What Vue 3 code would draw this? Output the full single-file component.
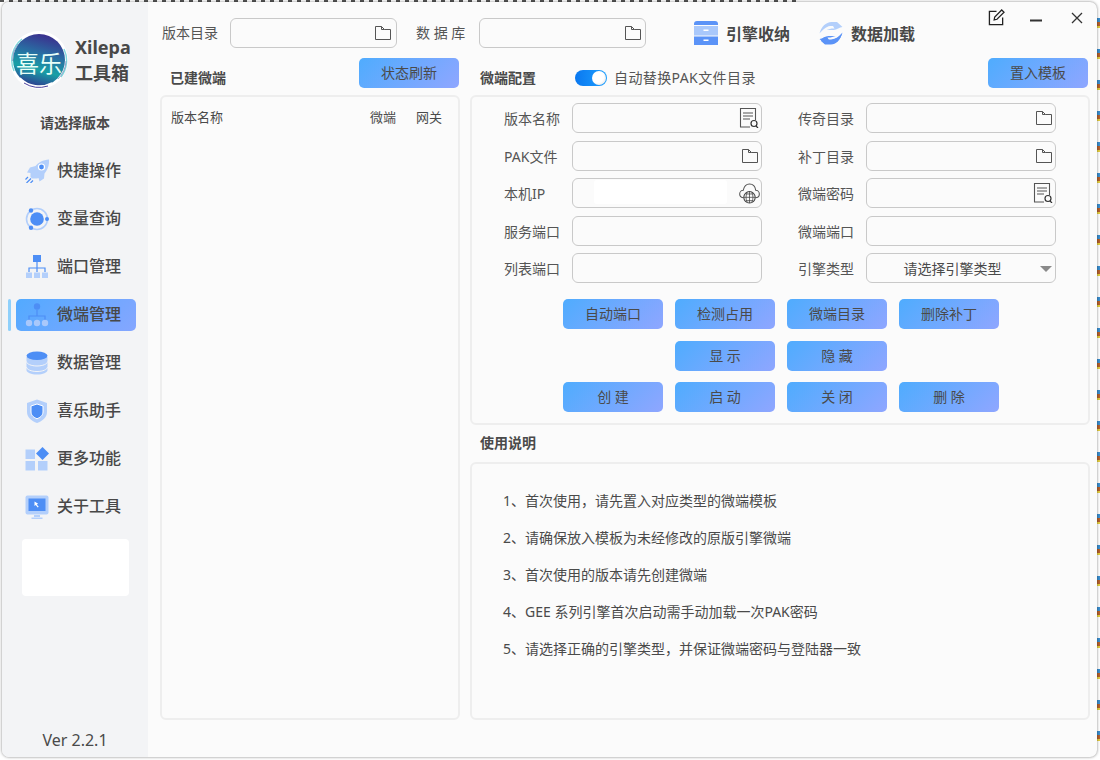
<script setup>
const navItems = [
  { label: '快捷操作', icon: 'rocket' },
  { label: '变量查询', icon: 'orbit' },
  { label: '端口管理', icon: 'org' },
  { label: '微端管理', icon: 'nodes', active: true },
  { label: '数据管理', icon: 'db' },
  { label: '喜乐助手', icon: 'shield' },
  { label: '更多功能', icon: 'apps' },
  { label: '关于工具', icon: 'monitor' },
]
const leftFields = [
  { label: '版本名称', icon: 'doc' },
  { label: 'PAK文件', icon: 'folder' },
  { label: '本机IP', icon: 'globe', mask: true },
  { label: '服务端口' },
  { label: '列表端口' },
]
const rightFields = [
  { label: '传奇目录', icon: 'folder' },
  { label: '补丁目录', icon: 'folder' },
  { label: '微端密码', icon: 'doc' },
  { label: '微端端口' },
  { label: '引擎类型', select: '请选择引擎类型' },
]
const formRows = leftFields.map((f, i) => [f, rightFields[i]])
const buttonRows = [
  ['自动端口', '检测占用', '微端目录', '删除补丁'],
  ['', '显 示', '隐 藏', ''],
  ['创 建', '启 动', '关 闭', '删 除'],
]
const notes = [
  '1、首次使用，请先置入对应类型的微端模板',
  '2、请确保放入模板为未经修改的原版引擎微端',
  '3、首次使用的版本请先创建微端',
  '4、GEE 系列引擎首次启动需手动加载一次PAK密码',
  '5、请选择正确的引擎类型，并保证微端密码与登陆器一致',
]
</script>

<template>
  <div class="window">
    <aside class="sidebar">
      <div class="brand">
        <div class="logo">
          <svg class="logo-art" viewBox="0 0 58 58">
            <defs>
              <linearGradient id="logoFill" x1="0.62" y1="0" x2="0.35" y2="1">
                <stop offset="0" stop-color="#3c2e8d" />
                <stop offset="0.35" stop-color="#2a6aa2" />
                <stop offset="0.68" stop-color="#18a0a6" />
                <stop offset="1" stop-color="#2f3a90" />
              </linearGradient>
            </defs>
            <circle cx="29" cy="29" r="29" fill="#fff" />
            <circle cx="29" cy="29" r="26" fill="url(#logoFill)" />
            <path d="M4 40A27 27 0 0 1 12 8M54 18a27 27 0 0 1-3 28" fill="none" stroke="#7fd8dc" stroke-width="1.400" />
            <path d="M2.500 30A27 27 0 0 1 8 13M56 30a27 27 0 0 1-8 18" fill="none" stroke="#8a8fc0" stroke-width="0.800" />
            <path d="M10 47a27 27 0 0 0 32 5" fill="none" stroke="#fff" stroke-width="1.600" />
            <path d="M14 52a29 29 0 0 0 24 3" fill="none" stroke="#4a3f9c" stroke-width="1" />
          </svg>
          <span class="logo-text">喜乐</span>
        </div>
        <div class="brand-name">
          <span>Xilepa</span>
          <span>工具箱</span>
        </div>
      </div>
      <div class="version-pick">请选择版本</div>
      <nav class="nav">
        <div v-for="item in navItems" :key="item.label" class="nav-row" :class="{ active: item.active }">
          <span class="nav-mark"></span>
          <div class="nav-item">
            <svg class="nav-icon" viewBox="0 0 24 24">
              <template v-if="item.icon === 'rocket'">
                <path d="M24 .5c.5 6-1.500 10.500-4.500 14l-.5 5-4.500 3-1-3.500-1.500.5H7l-1.500-1.500v-4l-3.500-.5 3-5 5.500-1.500C13.500 3.500 18 .8 24 .5z" fill="#b3cffb" />
                <circle cx="16.500" cy="8" r="3.600" fill="#fff" />
                <circle cx="16.500" cy="8" r="2.400" fill="#4d8ef5" />
                <path d="M1.500 24l4.500-4.500M.5 20.500L3 18M5.500 24l2.500-2.500" stroke="#4d8ef5" stroke-width="1.200" />
              </template>
              <template v-else-if="item.icon === 'orbit'">
                <circle cx="12" cy="12" r="10.500" fill="none" stroke="#b3cffb" stroke-width="1.600" />
                <circle cx="12" cy="12" r="6.800" fill="#4d8ef5" />
                <circle cx="6" cy="3.500" r="2.200" fill="#4d8ef5" />
                <circle cx="22" cy="12" r="2" fill="#4d8ef5" />
                <circle cx="6" cy="20.800" r="2.200" fill="#4d8ef5" />
              </template>
              <template v-else-if="item.icon === 'org'">
                <rect x="8" y="0" width="8" height="7" fill="#4d8ef5" />
                <path d="M12 7v10M4 17v-4h16v4" fill="none" stroke="#4d8ef5" stroke-width="1.200" />
                <rect x="1" y="17.500" width="6" height="5.500" fill="#b3cffb" />
                <rect x="9" y="17.500" width="6" height="5.500" fill="#b3cffb" />
                <rect x="17" y="17.500" width="6" height="5.500" fill="#b3cffb" />
              </template>
              <template v-else-if="item.icon === 'nodes'">
                <circle cx="12" cy="3.500" r="3.200" fill="#4d8ef5" />
                <path d="M12 7v6M4 17v-4h16v4" fill="none" stroke="#4d8ef5" stroke-width="1.200" />
                <circle cx="4" cy="20" r="3.200" fill="#a9c8fb" />
                <circle cx="12" cy="20" r="3.200" fill="#a9c8fb" />
                <circle cx="20" cy="20" r="3.200" fill="#a9c8fb" />
              </template>
              <template v-else-if="item.icon === 'db'">
                <path d="M1.500 6v13c0 2.500 4.700 4.500 10.500 4.500s10.500-2 10.500-4.500V6z" fill="#b3cffb" />
                <ellipse cx="12" cy="4.800" rx="10.500" ry="4.300" fill="#4d8ef5" />
                <path d="M1.500 10.500c0 2.500 4.700 4.500 10.500 4.500s10.500-2 10.500-4.500M1.500 16c0 2.500 4.700 4.500 10.500 4.500S22.500 18.500 22.500 16" fill="none" stroke="#f3f4f6" stroke-width="1" />
              </template>
              <template v-else-if="item.icon === 'shield'">
                <path d="M12 .5l10 3.500v9c0 5.500-4.500 9-10 11C6.500 22 2 18.500 2 13V4z" fill="#b3cffb" />
                <path d="M12 5l6 2v6c0 3.500-3 5.500-6 6.800C9 18.500 6 16.500 6 13V7z" fill="#4d8ef5" stroke="#fff" stroke-width="1" />
              </template>
              <template v-else-if="item.icon === 'apps'">
                <rect x="0.500" y="2.500" width="9.500" height="9.500" fill="#b3cffb" />
                <rect x="0.500" y="14" width="9.500" height="9.500" fill="#b3cffb" />
                <rect x="13" y="14" width="9.500" height="9.500" fill="#b3cffb" />
                <path d="M17.500 0L24 6.500l-6.500 6.500L11 6.500z" fill="#4d8ef5" />
              </template>
              <template v-else>
                <rect x="0.500" y="0.500" width="23" height="19" rx="2" fill="#b3cffb" />
                <rect x="3.500" y="3.500" width="17" height="12.500" fill="#4d8ef5" />
                <path d="M9.500 6.500v4.500l1.200-1 2 2.500 1-.8-2-2.300 1.500-.6z" fill="#fff" />
                <path d="M9 20h6v2H9zM6.500 22.500h11V24h-11z" fill="#b3cffb" />
              </template>
            </svg>
            <span class="nav-label">{{ item.label }}</span>
          </div>
        </div>
      </nav>
      <div class="white-card"></div>
      <div class="version">Ver 2.2.1</div>
    </aside>

    <main class="main">
      <header class="topbar">
        <span class="label path-label">版本目录</span>
        <div class="field path-field">
          <svg class="icon-folder" viewBox="0 0 16 14"><path d="M.5.5h6l3 3h6v10H.5zM6.500.5v3h3" fill="none" stroke="#555" /></svg>
        </div>
        <span class="label db-label">数 据 库</span>
        <div class="field path-field db-field">
          <svg class="icon-folder" viewBox="0 0 16 14"><path d="M.5.5h6l3 3h6v10H.5zM6.500.5v3h3" fill="none" stroke="#555" /></svg>
        </div>
        <div class="action first-action">
          <svg class="action-icon" viewBox="0 0 24 24">
            <path d="M3 0h18a3 3 0 0 1 3 3v1H0V3a3 3 0 0 1 3-3z" fill="#5b93f7" />
            <rect x="0" y="5" width="24" height="9.500" fill="#a9c8fb" />
            <rect x="9.500" y="8.500" width="5" height="1.500" fill="#fff" />
            <path d="M0 15.500h24V24H0z" fill="#5b93f7" />
            <rect x="9.500" y="18.500" width="5" height="1.500" fill="#fff" />
          </svg>
          <span>引擎收纳</span>
        </div>
        <div class="action second-action">
          <svg class="action-icon" viewBox="0 0 24 24">
            <path d="M0.500 12.500C2 6 7 1 12.500 1H18l5.500 5c-3 .5-5.500 2.500-9 3H7.500l5-1.500h3L14 5H11C7 5.500 3.500 9 .5 12.500z" fill="#b3cffb" />
            <path d="M23.500 11.500C22 18 17 23 11.500 23H6L.5 18c3-.5 5.500-2.500 9-3h7l-5 1.500h-3L10 19h3c4-.5 7.500-4 10.500-7.500z" fill="#5b93f7" />
            <path d="M2 20l4 3.500h6c5 0 9-4 11-11-3 3-6 5.500-11 6H8L6 16c-1.500.5-3 2-4 4z" fill="#5b93f7" />
          </svg>
          <span>数据加载</span>
        </div>
        <div class="window-controls">
          <svg class="ctl-edit" viewBox="0 0 18 18">
            <path d="M9 2.500H1.500v14h14V9" fill="none" stroke="#222" stroke-width="1.400" />
            <path d="M6.500 11.500l.6-3L14.500 1l2.500 2.500-7.500 7.400z" fill="none" stroke="#222" stroke-width="1.300" />
          </svg>
          <svg class="ctl-min" viewBox="0 0 12 3"><rect width="12" height="2" y="0.500" fill="#333" /></svg>
          <svg class="ctl-close" viewBox="0 0 12 12"><path d="M1 1l10 10M11 1L1 11" stroke="#333" stroke-width="1.300" /></svg>
        </div>
      </header>

      <div class="columns">
        <section class="col">
          <div class="col-head">
            <h2 class="title">已建微端</h2>
            <button class="btn push-right">状态刷新</button>
          </div>
          <div class="panel list-panel">
            <div class="list-head">
              <span>版本名称</span>
              <span class="col-wd">微端</span>
              <span class="col-gw">网关</span>
            </div>
          </div>
        </section>

        <section class="col">
          <div class="col-head right-head">
            <h2 class="title">微端配置</h2>
            <span class="toggle"><span class="knob"></span></span>
            <span class="label toggle-label">自动替换PAK文件目录</span>
            <button class="btn push-right">置入模板</button>
          </div>
          <div class="panel config-panel">
            <div class="form-grid">
              <template v-for="(row, r) in formRows" :key="r">
                <div v-for="f in row" :key="f.label" class="form-item">
                  <span class="label form-label">{{ f.label }}</span>
                  <div class="field form-field" :class="{ 'is-select': f.select }">
                    <span v-if="f.mask" class="mask"></span>
                    <span v-if="f.select" class="select-text">{{ f.select }}</span>
                    <span v-if="f.select" class="arrow"></span>
                    <svg v-if="f.icon === 'folder'" class="icon-folder" viewBox="0 0 16 14"><path d="M.5.5h6l3 3h6v10H.5zM6.500.5v3h3" fill="none" stroke="#555" /></svg>
                    <svg v-if="f.icon === 'doc'" class="icon-doc" viewBox="0 0 20 20">
                      <path d="M11 19H1.500V.500h15V12" fill="none" stroke="#555" stroke-width="1.100" />
                      <path d="M4 5h10M4 8h10M4 11h7" stroke="#555" stroke-width="1.100" />
                      <circle cx="15" cy="15.500" r="3" fill="none" stroke="#333" stroke-width="1.200" />
                      <path d="M17 18l2 2" stroke="#333" stroke-width="1.200" />
                    </svg>
                    <svg v-if="f.icon === 'globe'" class="icon-globe" viewBox="0 0 22 22">
                      <path d="M5 15.500C2 15.500.7 13.500.7 11.500c0-2.300 1.800-4 3.800-4C5.300 3.500 8 1 11 1c3.500 0 6 2.500 6.500 6.500 2 0 3.800 1.700 3.800 4 0 2-1.300 4-4.300 4" fill="none" stroke="#555" stroke-width="1.100" />
                      <circle cx="11" cy="15" r="6" fill="#fbfbfb" stroke="#444" stroke-width="1.100" />
                      <path d="M5 15h12M11 9v12M7.500 11.500h7M7.500 18.500h7M8.500 10c-1.500 3-1.500 7 0 10M13.500 10c1.500 3 1.500 7 0 10" fill="none" stroke="#444" stroke-width="0.800" />
                    </svg>
                  </div>
                </div>
              </template>
            </div>
            <div class="btn-rows">
              <div v-for="(row, i) in buttonRows" :key="i" class="btn-row">
                <template v-for="(b, j) in row" :key="j">
                  <button v-if="b" class="btn">{{ b }}</button>
                  <span v-else class="btn-gap"></span>
                </template>
              </div>
            </div>
          </div>
          <h2 class="title notes-title">使用说明</h2>
          <div class="panel notes-panel">
            <p v-for="n in notes" :key="n" class="note">{{ n }}</p>
          </div>
        </section>
      </div>
    </main>
  </div>
</template>

<style>
html, body {
  height: 760px;
  overflow: hidden;
}
body {
  background-color: #fff;
  background-image:
    repeating-linear-gradient(180deg, #fff 0 18px, #3b8fd0 18px 22px, #b5602c 22px 26px, #e6d040 26px 28px, #fff 28px 31px),
    repeating-linear-gradient(90deg, #555 0 4px, #fff 4px 9px);
  background-size: 3px 100%, 800px 2px;
  background-position: right top, left top;
  background-repeat: no-repeat;
}
</style>

<style scoped>
.window {
  width: 1095px;
  height: 755px;
  margin: 2px 3px 3px 2px;
  display: flex;
  border-radius: 7px;
  overflow: hidden;
  background: #fbfbfb;
  box-shadow: 0 0 3px rgba(0, 0, 0, 0.5);
  font-family: "Noto Sans", "Noto Sans CJK SC", sans-serif;
  color: #4a4a4a;
}

/* Sidebar */
.sidebar {
  width: 146px;
  flex: none;
  background: #f3f4f6;
  display: flex;
  flex-direction: column;
  align-items: stretch;
}
.brand {
  display: flex;
  align-items: center;
  gap: 7px;
  padding: 29px 0 0 8px;
}
.logo {
  position: relative;
  width: 58px;
  height: 58px;
  flex: none;
}
.logo-art {
  display: block;
  width: 58px;
  height: 58px;
}
.logo-text {
  position: absolute;
  inset: 0;
  display: flex;
  align-items: center;
  justify-content: center;
  padding-top: 3px;
  color: #e8fff8;
  font-size: 23px;
  white-space: nowrap;
}
.brand-name {
  display: flex;
  flex-direction: column;
  font-size: 18px;
  font-weight: 700;
  line-height: 26px;
  color: #484848;
}
.version-pick {
  margin-top: 24px;
  text-align: center;
  font-size: 14px;
  font-weight: 700;
  line-height: 20px;
  width: 146px;
  color: #4a4a4a;
}
.nav {
  margin-top: 22px;
  display: flex;
  flex-direction: column;
  gap: 16px;
}
.nav-row {
  height: 32px;
  display: flex;
  align-items: center;
  padding-left: 6px;
}
.nav-mark {
  width: 3px;
  height: 32px;
  border-radius: 2px;
  flex: none;
}
.active .nav-mark {
  background: #8fd0fb;
}
.nav-item {
  box-sizing: border-box;
  width: 120px;
  height: 32px;
  margin-left: 5px;
  border-radius: 5px;
  display: flex;
  align-items: center;
  padding-left: 9px;
}
.active .nav-item {
  background: linear-gradient(135deg, #52aaff, #85a6ff);
}
.nav-icon {
  width: 24px;
  height: 24px;
  flex: none;
}
.nav-label {
  margin: 0 0 5px 8px;
  font-size: 16px;
  font-weight: 500;
  color: #484848;
  white-space: nowrap;
}
.white-card {
  width: 107px;
  height: 57px;
  margin: 16px 0 0 20px;
  background: #fff;
  border-radius: 4px;
}
.version {
  margin-top: auto;
  padding-bottom: 5px;
  text-align: center;
  font-size: 16px;
  line-height: 24px;
  color: #4a4a4a;
}

/* Main */
.main {
  flex: 1;
  min-width: 0;
  display: flex;
  flex-direction: column;
  padding: 0 7px 37px 12px;
}
.topbar {
  height: 46px;
  display: flex;
  align-items: flex-end;
  flex: none;
}
.label {
  font-size: 14px;
  line-height: 30px;
  color: #555;
  white-space: nowrap;
}
.path-label {
  margin-left: 2px;
  width: 68px;
}
.db-label {
  margin-left: 19px;
  width: 63px;
}
.field {
  height: 30px;
  box-sizing: border-box;
  border: 1px solid #c9c9c9;
  border-radius: 6px;
  background: #fbfbfb;
  display: flex;
  align-items: center;
  justify-content: flex-end;
  padding-right: 5px;
  position: relative;
}
.path-field {
  width: 167px;
}
.db-field {
  padding-right: 4px;
}
.icon-folder {
  width: 16px;
  height: 14px;
  flex: none;
}
.icon-doc {
  width: 20px;
  height: 20px;
  margin-right: -1px;
  flex: none;
}
.icon-globe {
  width: 21px;
  height: 21px;
  margin-right: -2px;
  flex: none;
}
.action {
  display: flex;
  align-items: center;
  gap: 8px;
  height: 30px;
  font-size: 16px;
  font-weight: 700;
  color: #484848;
  white-space: nowrap;
}
.first-action {
  margin-left: 48px;
}
.second-action {
  margin-left: 29px;
}
.action-icon {
  width: 24px;
  height: 24px;
  flex: none;
}
.window-controls {
  margin-left: auto;
  align-self: flex-start;
  display: flex;
  align-items: center;
  padding-top: 7px;
  height: 17px;
}
.ctl-edit {
  width: 17px;
  height: 17px;
}
.ctl-min {
  width: 12px;
  height: 3px;
  margin: 6px 0 0 25px;
}
.ctl-close {
  width: 12px;
  height: 12px;
  margin: 0 7px 0 29px;
}

.columns {
  flex: 1;
  min-height: 0;
  margin-top: 10px;
  display: grid;
  grid-template-columns: 300px 620px;
  gap: 10px;
}
.col {
  display: flex;
  flex-direction: column;
  min-height: 0;
}
.col-head {
  height: 30px;
  margin-right: 1px;
  margin-bottom: 7px;
  display: flex;
  align-items: flex-end;
  flex: none;
}
.right-head {
  margin-right: 2px;
}
.title {
  margin: 0;
  padding-left: 10px;
  font-size: 14px;
  font-weight: 700;
  line-height: 20px;
  color: #4a4a4a;
}
.push-right {
  margin-left: auto;
}
.btn {
  width: 100px;
  height: 30px;
  padding: 0;
  border: 0;
  border-radius: 5px;
  background: linear-gradient(135deg, #4facfe, #8fa6ff);
  color: #4a4a4a;
  font-family: inherit;
  font-size: 14px;
  line-height: 30px;
  white-space: nowrap;
  flex: none;
}
.btn-gap {
  width: 100px;
  flex: none;
}
.toggle {
  width: 32px;
  height: 16px;
  margin: 0 0 2px 39px;
  border-radius: 8px;
  background: linear-gradient(90deg, #0a78f0, #1ea0ff);
  display: flex;
  align-items: center;
  justify-content: flex-end;
  padding-right: 1px;
  box-sizing: border-box;
}
.knob {
  width: 14px;
  height: 14px;
  border-radius: 50%;
  background: radial-gradient(circle at 40% 40%, #fff 50%, #d8d8d8);
}
.toggle-label {
  margin-left: 7px;
  letter-spacing: 0.4px;
  line-height: 20px;
}
.panel {
  border: 2px solid #eeeeee;
  border-radius: 6px;
  box-sizing: border-box;
  background: #fbfbfb;
}
.list-panel {
  flex: 1;
  min-height: 0;
}
.list-head {
  display: flex;
  align-items: center;
  padding: 10px 0 0 9px;
  font-size: 13px;
  line-height: 20px;
  color: #4a4a4a;
}
.col-wd {
  margin-left: auto;
}
.col-gw {
  margin: 0 16px 0 20px;
}

/* Config */
.config-panel {
  height: 330px;
  flex: none;
  padding: 6px 0 0 32px;
}
.form-grid {
  display: grid;
  grid-template-columns: 258px 258px;
  grid-auto-rows: 30px;
  column-gap: 36px;
  row-gap: 7.5px;
}
.form-item {
  display: flex;
  align-items: center;
  height: 30px;
}
.form-label {
  width: 68px;
  height: 30px;
  line-height: 31px;
  flex: none;
}
.form-field {
  width: 190px;
  padding-right: 3px;
}
.mask {
  position: absolute;
  left: 21px;
  top: 1px;
  width: 133px;
  height: 24px;
  background: #fff;
  border-radius: 3px;
}
.is-select {
  justify-content: center;
  padding-right: 17px;
}
.select-text {
  font-size: 14px;
  color: #4a4a4a;
}
.arrow {
  position: absolute;
  right: 3px;
  top: 12px;
  width: 0;
  height: 0;
  border-left: 6px solid transparent;
  border-right: 6px solid transparent;
  border-top: 6px solid #8a8a8a;
}
.btn-rows {
  margin: 16px 0 0 59px;
  display: flex;
  flex-direction: column;
  gap: 12px;
}
.btn-row {
  display: flex;
  gap: 12px;
}
.btn-row:last-child {
  margin-top: -1px;
}
.notes-title {
  flex: none;
  height: 37px;
  line-height: 35px;
}
.notes-panel {
  flex: 1;
  min-height: 0;
  padding: 27px 0 0 31px;
}
.note {
  margin: 0 0 17px;
  font-size: 14px;
  line-height: 20px;
  color: #4a4a4a;
}
</style>
